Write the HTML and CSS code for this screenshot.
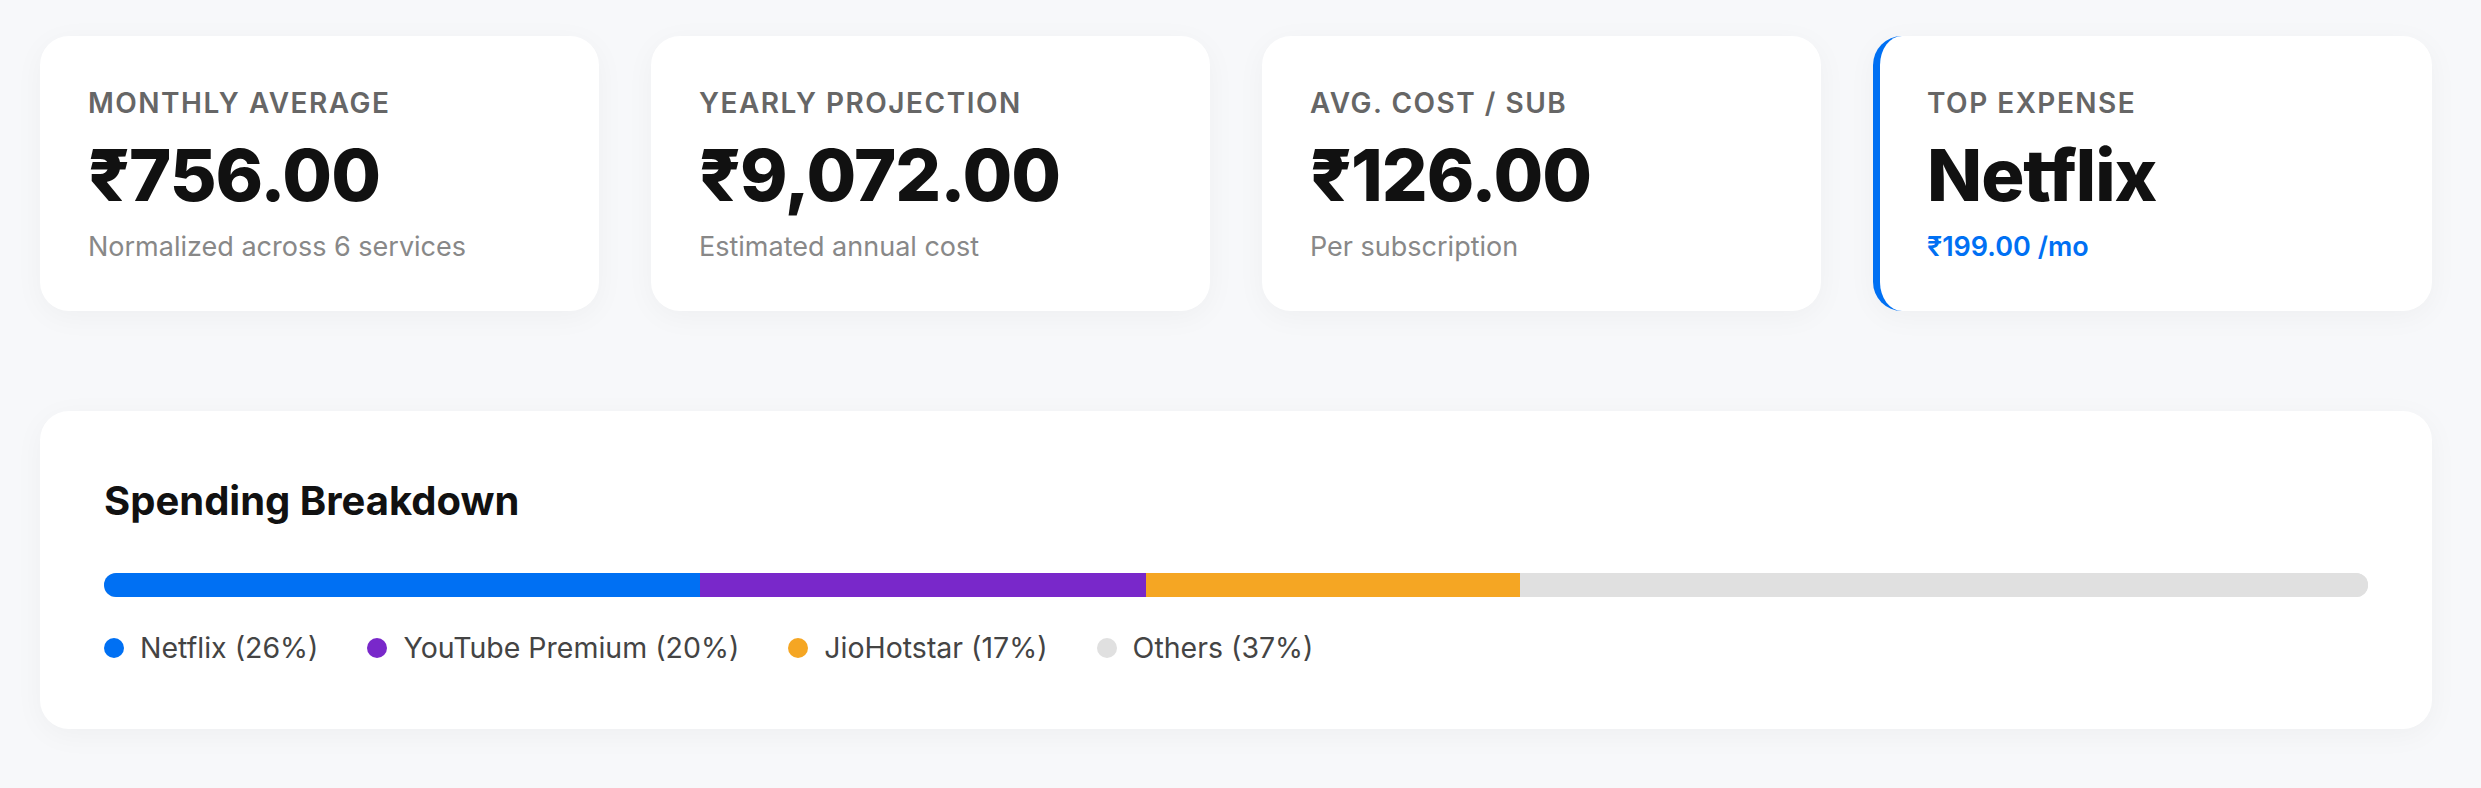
FILE: index.html
```html
<!DOCTYPE html>
<html lang="en">

<head>
    <meta charset="UTF-8">
    <title>Subscription Insights</title>
    <link rel="stylesheet" href="styles.css">
</head>

<body>

    <div class="painel">

        <div class="resumo">
            <div class="cartao">
                <div class="rotulo">Monthly Average</div>
                <div class="valor">₹756.00</div>
                <div class="detalhe">Normalized across 6 services</div>
            </div>
            <div class="cartao">
                <div class="rotulo">Yearly Projection</div>
                <div class="valor">₹9,072.00</div>
                <div class="detalhe">Estimated annual cost</div>
            </div>
            <div class="cartao">
                <div class="rotulo">Avg. Cost / Sub</div>
                <div class="valor">₹126.00</div>
                <div class="detalhe">Per subscription</div>
            </div>
            <div class="cartao destaque">
                <div class="rotulo">Top Expense</div>
                <div class="valor">Netflix</div>
                <div class="detalhe preco">₹199.00 /mo</div>
            </div>
        </div>

        <div class="distribuicao">
            <h2>Spending Breakdown</h2>
            <div class="barra">
                <div class="segmento netflix" style="width: 26.32%"></div>
                <div class="segmento youtube" style="width: 19.71%"></div>
                <div class="segmento hotstar" style="width: 16.52%"></div>
                <div class="segmento outros" style="width: 37.45%"></div>
            </div>
            <div class="legenda">
                <span class="item"><i class="ponto netflix"></i>Netflix (26%)</span>
                <span class="item"><i class="ponto youtube"></i>YouTube Premium (20%)</span>
                <span class="item"><i class="ponto hotstar"></i>JioHotstar (17%)</span>
                <span class="item"><i class="ponto outros"></i>Others (37%)</span>
            </div>
        </div>

    </div>

</body>

</html>
```

FILE: styles.css
```css
body {
    font-family: Inter, "Noto Sans", Arial, sans-serif;
    margin: 0;
    background-color: #f7f8fa;
    color: #111;
}

.painel {
    padding: 36px 49px 40px 40px;
}

.resumo {
    display: grid;
    grid-template-columns: repeat(4, 1fr);
    gap: 52px;
    margin-bottom: 100px;
}

.cartao,
.distribuicao {
    background-color: #fff;
    border-radius: 29px;
    box-shadow: 0 6px 30px rgba(0, 0, 0, 0.04);
}

.cartao {
    padding: 50px 48px 48px 48px;
}

.cartao.destaque {
    border-left: 7px solid #0070f3;
    padding-left: 47px;
}

.rotulo {
    font-size: 28px;
    line-height: 34px;
    font-weight: 600;
    text-transform: uppercase;
    letter-spacing: 1.5px;
    color: #666;
}

.valor {
    margin: 11px 0 12px 0;
    font-size: 72px;
    line-height: 87px;
    font-weight: 800;
    letter-spacing: -1px;
    color: #111;
}

.detalhe {
    margin-top: 3px;
    font-size: 27px;
    line-height: 33px;
    color: #888;
}

.detalhe.preco {
    color: #0070f3;
    font-weight: 600;
}

.distribuicao {
    padding: 66px 64px 64px 64px;
}

.distribuicao h2 {
    margin: 0 0 48px 0;
    font-size: 40px;
    line-height: 48px;
    font-weight: 700;
}

.barra {
    display: flex;
    height: 24px;
    border-radius: 12px;
    overflow: hidden;
    background-color: #e0e0e0;
}

.segmento {
    height: 100%;
}

.netflix {
    background-color: #0070f3;
}

.youtube {
    background-color: #7928ca;
}

.hotstar {
    background-color: #f5a623;
}

.outros {
    background-color: #e0e0e0;
}

.legenda {
    display: flex;
    flex-wrap: wrap;
    gap: 49px;
    margin-top: 33px;
}

.item {
    display: flex;
    align-items: center;
    gap: 16px;
    font-size: 28.5px;
    line-height: 35px;
    color: #444;
}

.ponto {
    width: 20px;
    height: 20px;
    border-radius: 50%;
}
```
